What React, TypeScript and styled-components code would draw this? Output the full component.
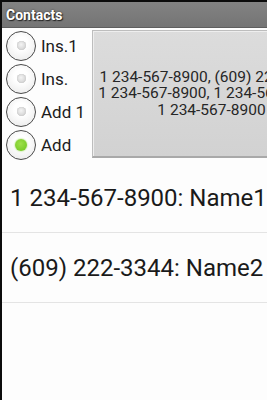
import styled, { createGlobalStyle } from "styled-components";

const GlobalStyle = createGlobalStyle`
    html, body {
        margin: 0;
        padding: 0;
        background: #0c0c0c;
        overflow: hidden;
    }
    body {
        font-family: Roboto, "Liberation Sans", sans-serif;
    }
`;

const Screen = styled.div`
    margin-left: 2px;
    height: 400px;
    display: flex;
    flex-direction: column;
    background: #fdfdfd;
    border-top: 2px solid #0c0c0c;
    box-sizing: border-box;
`;

const TitleBar = styled.header`
    height: 26px;
    flex-shrink: 0;
    display: flex;
    align-items: center;
    padding-left: 4px;
    background: linear-gradient(#838383, #747474);
    border-bottom: 1px solid #5e5e5e;
    box-sizing: border-box;
`;

const Title = styled.h1`
    margin: 0;
    font-size: 14px;
    font-weight: bold;
    color: #fff;
    text-shadow: 0 0 2px #333, 1px 1px 1px #222;
`;

const Top = styled.div`
    display: flex;
    align-items: flex-start;
    height: 135px;
    overflow: hidden;
    flex-shrink: 0;
`;

const RadioGroup = styled.div`
    width: 90px;
    flex-shrink: 0;
    padding-top: 1px;
    display: flex;
    flex-direction: column;
`;

const RadioRow = styled.label`
    height: 33px;
    display: flex;
    align-items: center;
    gap: 5px;
    padding-left: 4px;
    font-size: 17px;
    color: #1c1c1c;
    white-space: nowrap;
`;

const Circle = styled.span`
    width: 30px;
    height: 30px;
    flex-shrink: 0;
    border-radius: 50%;
    border: 1.5px solid #4a4a4a;
    box-sizing: border-box;
    background: radial-gradient(circle at 50% 40%, #ffffff 30%, #e6e6e6 100%);
    display: flex;
    align-items: center;
    justify-content: center;
`;

const Dot = styled.span<{ $on?: boolean }>`
    width: ${(p) => (p.$on ? "12px" : "9px")};
    height: ${(p) => (p.$on ? "12px" : "9px")};
    border-radius: 50%;
    background: ${(p) =>
        p.$on
            ? "radial-gradient(circle at 45% 40%, #9ee04a, #6cc41c)"
            : "radial-gradient(circle at 45% 40%, #f4f4f4, #c8c8c8)"};
    box-shadow: ${(p) => (p.$on ? "0 0 2px #8cd640" : "inset 0 0 1px #aaa")};
`;

const BigButton = styled.div`
    margin-top: 2px;
    width: 239px;
    height: 128px;
    flex-shrink: 0;
    box-sizing: border-box;
    border: 1px solid #bdbdbd;
    border-bottom: 2px solid #a9a9a9;
    background: linear-gradient(#dcdcdc, #d2d2d2);
    box-shadow: inset 1px 1px 0 #eeeeee;
    display: flex;
    align-items: center;
    justify-content: center;
    text-align: center;
    font-size: 15.5px;
    line-height: 16.5px;
    color: #262626;
    white-space: nowrap;
`;

const List = styled.ul`
    list-style: none;
    margin: 0;
    padding: 0;
`;

const Row = styled.li`
    height: 69px;
    display: flex;
    align-items: center;
    padding-left: 8px;
    font-size: 24px;
    color: #1a1a1a;
    white-space: nowrap;
    border-bottom: 1px solid #e4e4e4;
`;

const options = [
    { label: "Ins.1", on: false },
    { label: "Ins.", on: false },
    { label: "Add 1", on: false },
    { label: "Add", on: true },
];

const contacts = ["1 234-567-8900: Name1", "(609) 222-3344: Name2"];

function App() {
    return (
        <>
            <GlobalStyle />
            <Screen>
                <TitleBar>
                    <Title>Contacts</Title>
                </TitleBar>
                <Top>
                    <RadioGroup>
                        {options.map((o) => (
                            <RadioRow key={o.label}>
                                <Circle>
                                    <Dot $on={o.on} />
                                </Circle>
                                {o.label}
                            </RadioRow>
                        ))}
                    </RadioGroup>
                    <BigButton>
                        <div>
                            1 234-567-8900, (609) 222-3344,
                            <br />
                            1 234-567-8900, 1 234-567-8900,
                            <br />
                            1 234-567-8900
                        </div>
                    </BigButton>
                </Top>
                <List>
                    {contacts.map((c) => (
                        <Row key={c}>{c}</Row>
                    ))}
                </List>
            </Screen>
        </>
    );
}

export default App;
